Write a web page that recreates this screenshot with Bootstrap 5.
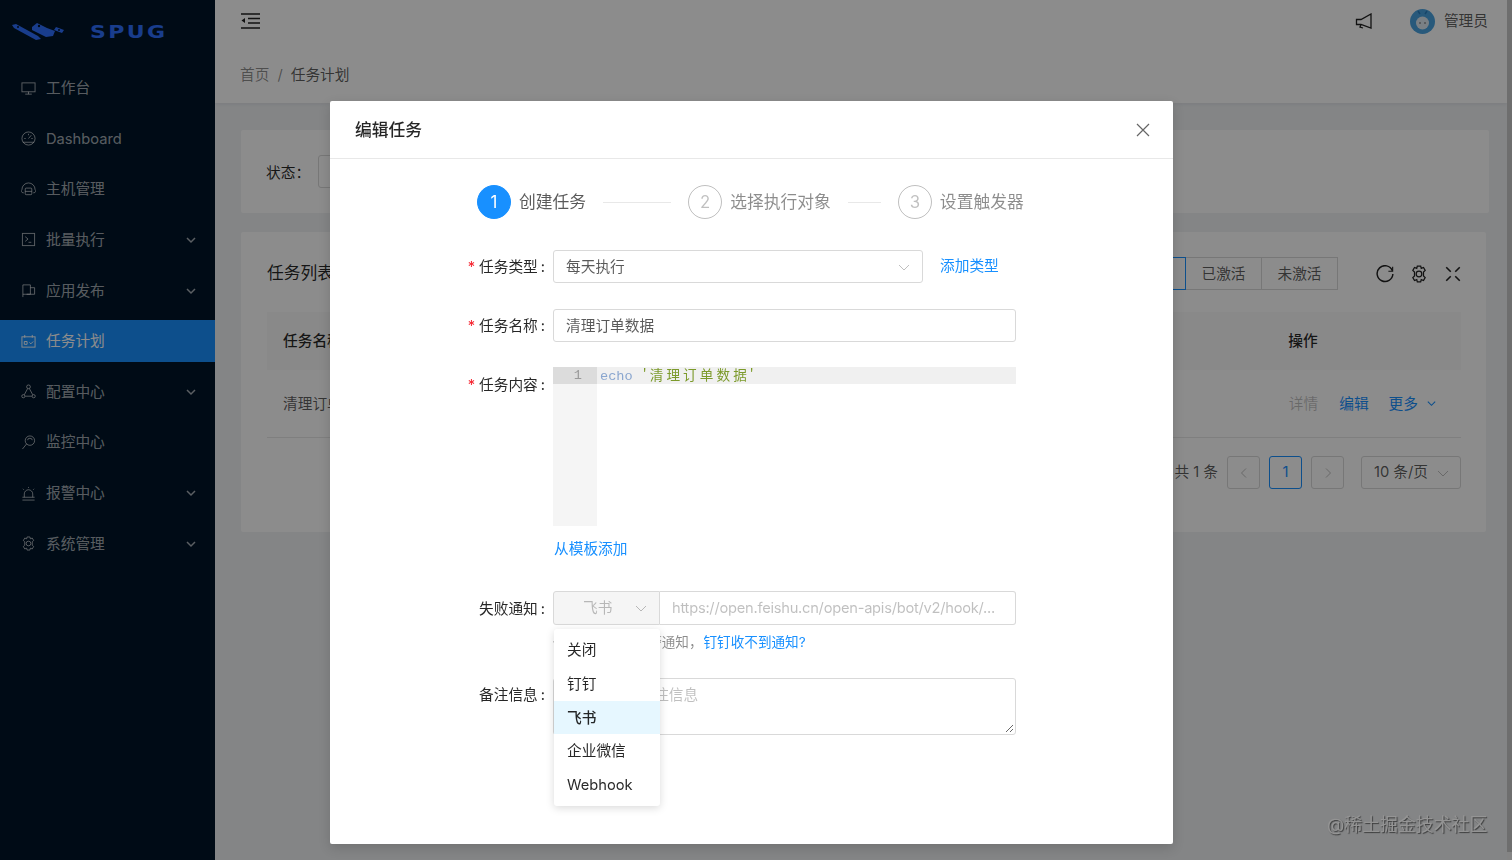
<!DOCTYPE html>
<html lang="zh"><head><meta charset="utf-8"><title>任务计划</title>
<link href="https://cdn.jsdelivr.net/npm/bootstrap@5.3.0/dist/css/bootstrap.min.css" rel="stylesheet">
<style>
html,body{height:860px;overflow:hidden}
body{font-family:Inter,"Noto Sans CJK SC",sans-serif;font-size:14.7px;color:rgba(0,0,0,.65);background:#f0f2f5}
.app{height:860px}
.side{width:215px;background:#001529;color:rgba(255,255,255,.65);flex:none}
.logo{height:63px;padding-left:12px}
.logo-word{font-family:"DejaVu Sans",sans-serif;font-weight:700;font-size:22px;letter-spacing:2.4px;color:#2f6fff;margin-left:25px;line-height:1;transform:scaleY(.8)}
.mi{height:42px;margin-bottom:8.65px;padding-left:21px;padding-right:18px}
.mi svg.ic{width:15px;height:15px;margin-right:10px;flex:none}
.mi .cv{margin-left:auto;width:12px;height:12px}
.mi.on{background:#1890ff;color:#fff}
.first-mi{margin-top:4px}
.main-col{flex:1;min-width:0}
.bar{width:5px;flex:none;background:linear-gradient(#c8c8c8 852px,#f0f0f0 852px)}
.top-h{height:103px;background:#fff;box-shadow:0 1px 4px rgba(0,21,41,.08)}
.tb{height:42px;padding:0 19px 0 26px}
.avt{margin-left:38px}
.adm{margin-left:9px}
.crumb{padding:20px 0 0 25px;line-height:26px}
.crumb i{font-style:normal;margin:0 8px;color:rgba(0,0,0,.45)}
.crumb span{color:rgba(0,0,0,.45)}
.crumb b{font-weight:400;color:rgba(0,0,0,.65)}
.pn{margin:27px 21px 0 26px}
.pcard{background:#fff;border-radius:2px}
.filter{height:83px;margin-right:-3px;padding-left:25px}
.flt-l{padding-top:3px;color:rgba(0,0,0,.85)}
.fake-sel{width:140px;height:33px;border:1px solid #d9d9d9;border-radius:3px;margin-left:8px}
.list{height:300px;margin-top:19px;padding:25px 25px 0 26px}
.list-h{height:33px;font-size:16.8px;color:rgba(0,0,0,.85)}
.seg{margin-left:auto;margin-right:38px;font-size:14.7px;color:rgba(0,0,0,.65)}
.seg span{height:33px;width:76px;border:1px solid #d9d9d9;border-left:0;display:flex;align-items:center;justify-content:center;padding-top:1px}
.seg span.act{width:120px;color:#1890ff;border:1px solid #1890ff}
.tools{gap:16px;margin-right:-1px}
.tools svg{width:18px;height:18px}
.thd{height:58px;margin-top:22px;background:#fafafa;color:rgba(0,0,0,.85);font-weight:500;padding-left:16px}
.trw{height:68px;border-bottom:1px solid #e8e8e8;padding-left:16px;padding-top:1px}
.col-op{margin-left:auto}
.thd .col-op{width:316px;text-align:center;padding-left:0}
.trw .col-op{padding-right:24px}
.off{color:rgba(0,0,0,.25)}
.lk{color:#1890ff;text-decoration:none}
.gap-e{margin-left:21px}
.gap-m{margin-left:20px}
.pg{margin-top:18px;height:33px}
.pgb{width:33px;height:33px;border:1px solid #d9d9d9;border-radius:3px;margin-left:9px;color:rgba(0,0,0,.25)}
.pgb.cur{color:#1890ff;border-color:#1890ff}
.pgs{width:100px;height:33px;border:1px solid #d9d9d9;border-radius:3px;margin-left:17px;padding-left:12px}
.pgc{margin-right:11px;color:rgba(0,0,0,.25)}
.mask{position:fixed;inset:0;background:rgba(0,0,0,.45)}
.dlg{position:absolute;left:330px;top:101px;width:843px;height:743px;background:#fff;border:0;border-radius:2px;color:rgba(0,0,0,.65);box-shadow:0 4px 12px rgba(0,0,0,.15)}
.dlg-h{height:58px;padding:0 23px 0 25px;border-bottom:1px solid #e8e8e8}
.dlg-t{font-size:16.8px;font-weight:500;color:rgba(0,0,0,.85);margin:0;line-height:1;padding-top:1px}
.steps{margin:26px 0 0 147px;height:34px;font-size:16.8px;color:rgba(0,0,0,.45)}
.steps>span{padding-top:2px}
.circ{width:34px;height:34px;border-radius:50%;border:1px solid rgba(0,0,0,.25);color:rgba(0,0,0,.25);margin-right:8px;font-size:16.8px;flex:none;padding-top:1px}
.circ.cur{background:#1890ff;border-color:#1890ff;color:#fff}
.cur-t{color:rgba(0,0,0,.65)}
.ln{height:1px;background:#e8e8e8;flex:none;margin:0 16px 0 17px}
.lnw1{width:68px;margin-right:17px}
.lnw2{width:33px;margin-right:17px}
.frow{display:flex}
.rw1{margin-top:31px}
.rw2{margin-top:26px}
.rw3{margin-top:25px}
.lb3{margin-top:1px}
.rw4{margin:12px 0 0 224px;line-height:21px}
.rw5{margin-top:31px}
.rw6{margin-top:25px}
.add-t{margin-left:17px}
.flb{width:223px;height:33px;text-align:right;padding:1px 8px 0 0;color:rgba(0,0,0,.85);line-height:32px;flex:none}
.flb em{font-style:normal;color:#f5222d;margin-right:4px}
.flb u{text-decoration:none;margin-left:3px}
.fc{height:33px;border:1px solid #d9d9d9;border-radius:3px;padding:1px 12px 0;color:rgba(0,0,0,.65);display:flex;align-items:center;font-size:14.7px;box-shadow:none}
.fc svg,.nsel svg{width:12px;height:12px;margin-left:auto;color:rgba(0,0,0,.25)}
.w1{width:370px}.w2{width:463px}
.ed{width:463px;height:160px;position:relative;font-family:"Liberation Mono",monospace;font-size:13.6px;line-height:17px}
.gut{width:44px;height:159px;background:#f5f5f5}
.gut-a{height:17px;background:#dcdcdc;color:#999;text-align:right;padding-right:15px}
.ed-l{flex:1;height:17px;background:#f0f0f0;padding-left:3px;color:#8aa6cf;line-height:15px}
.ed-l b{font-weight:400;color:#7c9a2b;margin-left:2px}
.ed-l b span{font-family:"Noto Sans CJK SC",sans-serif;font-size:13.6px;letter-spacing:3.1px;line-height:15px}
.nsel{width:107px;height:34px;background:#f5f5f5;border:1px solid #d9d9d9;border-radius:3px 0 0 3px;color:rgba(0,0,0,.25);padding:0 12px 0 29px}
.nin{width:356px;height:34px;border:1px solid #d9d9d9;border-left:0;border-radius:0 3px 3px 0;padding:0 12px;color:rgba(0,0,0,.25);white-space:nowrap;overflow:hidden;letter-spacing:-.26px}
.hlp{margin:7px 0 0 223px;height:21px;line-height:21px;font-size:13.6px;color:rgba(0,0,0,.45)}
.hlp a{margin-left:1px}
.ta{width:463px;height:57px;border:1px solid #d9d9d9;border-radius:3px;padding:5px 12px;color:rgba(0,0,0,.25);position:relative}
.ta svg{position:absolute;right:1px;bottom:1px}
.nx{margin:26px 0 0 224px;height:33px;width:90px;background:#1890ff;color:#fff;border:0;border-radius:3px;font-size:14.7px}
.dd{position:absolute;left:224px;top:528px;width:106px;padding:4px 0;background:#fff;border-radius:3px;box-shadow:0 2px 8px rgba(0,0,0,.15);z-index:3}
.dd div{height:33.8px;line-height:35px;padding-left:13px;color:rgba(0,0,0,.85)}
.dd div.sel{background:#e6f7ff;font-weight:500}
.wm{position:absolute;left:1327px;top:812px;font-size:17.9px;line-height:26px;color:rgba(150,150,150,.95);text-shadow:1px 1px 1px rgba(0,0,0,.55)}
</style></head><body>
<div class="app d-flex">
 <aside class="side">
  <div class="logo d-flex align-items-center">
   <svg width="53" height="24" viewBox="0 0 53 24"><g fill="#2f6fff"><path d="M0 5l4-1 22 12 3 3-5 1L2 8z"/><path d="M20 7l5-4 10 5 8 3-2 5-7 1-14-7z"/><path d="M42 10l2-3 8 3-2 3z"/></g><g fill="#001529"><circle cx="27" cy="6" r="1.2"/><circle cx="6" cy="7" r="1"/><circle cx="47" cy="10" r="1"/></g></svg>
   <span class="logo-word">SPUG</span>
  </div>
  <div class="mi first-mi d-flex align-items-center"><svg class="ic" viewBox="0 0 16 16" fill="none" stroke="currentColor"><rect x="1" y="2" width="14" height="9.5"/><path d="M8 11.5V14M4.5 14h7"/></svg>工作台</div>
  <div class="mi d-flex align-items-center"><svg class="ic" viewBox="0 0 16 16" fill="none" stroke="currentColor"><circle cx="8" cy="8" r="7"/><path d="M8 8l3-3.5M3.5 8h1.5M11 8h1.5M8 3v1.5M2 12h12"/></svg>Dashboard</div>
  <div class="mi d-flex align-items-center"><svg class="ic" viewBox="0 0 16 16" fill="none" stroke="currentColor"><path d="M3 11.5H2.500A2 2 0 0 1 1 8a7 7 0 0 1 14 0 2 2 0 0 1-1.500 3.500H13"/><rect x="4.500" y="6.500" width="7" height="7" rx="1"/><path d="M4.500 10h7"/></svg>主机管理</div>
  <div class="mi d-flex align-items-center"><svg class="ic" viewBox="0 0 16 16" fill="none" stroke="currentColor"><rect x="1.500" y="1.500" width="13" height="13"/><path d="M4.500 5l3 2.500-3 2.500M8 11h3"/></svg>批量执行<svg class="cv" viewBox="0 0 12 12" fill="none" stroke="currentColor" stroke-width="1.500"><path d="M2 4l4 4 4-4"/></svg></div>
  <div class="mi d-flex align-items-center"><svg class="ic" viewBox="0 0 16 16" fill="none" stroke="currentColor"><path d="M2 15V2h8v10H2M10 5h4.500v7H6"/></svg>应用发布<svg class="cv" viewBox="0 0 12 12" fill="none" stroke="currentColor" stroke-width="1.500"><path d="M2 4l4 4 4-4"/></svg></div>
  <div class="mi on d-flex align-items-center"><svg class="ic" viewBox="0 0 16 16" fill="none" stroke="currentColor"><rect x="1" y="3" width="14" height="11"/><path d="M4 1v3M12 1v3M3.500 8h3v3h-3zM9 9l1.500 1.500L13 8"/></svg>任务计划</div>
  <div class="mi d-flex align-items-center"><svg class="ic" viewBox="0 0 16 16" fill="none" stroke="currentColor"><circle cx="8" cy="3" r="2"/><circle cx="2.500" cy="13" r="1.700"/><circle cx="13.500" cy="13" r="1.700"/><path d="M7 5l-3.500 6.500M9 5l3.500 6.500M4.500 13h7"/></svg>配置中心<svg class="cv" viewBox="0 0 12 12" fill="none" stroke="currentColor" stroke-width="1.500"><path d="M2 4l4 4 4-4"/></svg></div>
  <div class="mi d-flex align-items-center"><svg class="ic" viewBox="0 0 16 16" fill="none" stroke="currentColor"><circle cx="9.500" cy="6" r="5"/><path d="M6 9.500L1.500 15M7 5.500a2.500 2 0 0 1 5 0"/></svg>监控中心</div>
  <div class="mi d-flex align-items-center"><svg class="ic" viewBox="0 0 16 16" fill="none" stroke="currentColor"><path d="M3.500 12V8.500a4.500 4.500 0 0 1 9 0V12M1.500 12h13M1.500 15h13M8 1v1M2 3l1 1M14 3l-1 1"/></svg>报警中心<svg class="cv" viewBox="0 0 12 12" fill="none" stroke="currentColor" stroke-width="1.500"><path d="M2 4l4 4 4-4"/></svg></div>
  <div class="mi d-flex align-items-center"><svg class="ic" viewBox="0 0 16 16" fill="none" stroke="currentColor"><path d="M6.500 1h3l.5 2 2-.8 1.500 2.600-1.500 1.400v3.600l1.500 1.400-1.500 2.600-2-.8-.5 2h-3l-.5-2-2 .8L2.500 11.200 4 9.800V6.200L2.500 4.800 4 2.200l2 .8z"/><circle cx="8" cy="8" r="2.500"/></svg>系统管理<svg class="cv" viewBox="0 0 12 12" fill="none" stroke="currentColor" stroke-width="1.500"><path d="M2 4l4 4 4-4"/></svg></div>
 </aside>
 <div class="main-col">
  <div class="top-h">
   <div class="tb d-flex align-items-center">
    <svg width="19" height="16" viewBox="0 0 19 16" fill="none" stroke="#222" stroke-width="1.400"><path d="M0 1h19M7 5.500h12M7 10h12M0 15h19"/><path d="M4 5v5L0.500 7.500z" fill="#222" stroke="none"/></svg>
    <div class="ms-auto d-flex align-items-center">
     <svg width="17" height="16" viewBox="0 0 17 16" fill="none" stroke="#222" stroke-width="1.300"><path d="M16 1v14L6 11.500H1.500V6.500H6z"/><path d="M6 11.500l-1 2.500 3 1"/></svg>
     <svg class="avt" width="25" height="25" viewBox="0 0 25 25"><circle cx="12.500" cy="12.500" r="12.500" fill="#4aa3e0"/><circle cx="12.500" cy="14" r="6.500" fill="#dfeaf2"/><circle cx="10" cy="14" r=".8" fill="#555"/><circle cx="15" cy="14" r=".8" fill="#555"/><path d="M8 2l2 3M17 2l-2 3" stroke="#2a7fc0" stroke-width="1.500"/></svg>
     <span class="adm">管理员</span>
    </div>
   </div>
   <div class="crumb"><span>首页</span><i>/</i><b>任务计划</b></div>
  </div>
  <div class="pn">
   <div class="pcard filter d-flex align-items-center"><span class="flt-l">状态：</span><div class="fake-sel"></div></div>
   <div class="pcard list">
    <div class="list-h d-flex align-items-center"><span>任务列表</span>
     <div class="seg d-flex"><span class="act">全部</span><span>已激活</span><span>未激活</span></div>
     <div class="tools d-flex align-items-center">
      <svg viewBox="0 0 16 16" fill="none" stroke="#222" stroke-width="1.300"><path d="M14.500 5A7 7 0 1 0 15 8"/><path d="M14.800 1.500V5.500H11" stroke-width="1"/></svg>
      <svg viewBox="0 0 16 16" fill="none" stroke="#222" stroke-width="1.100"><path d="M6.500 1h3l.5 2 2-.8 1.500 2.600-1.500 1.400v3.600l1.500 1.400-1.500 2.600-2-.8-.5 2h-3l-.5-2-2 .8L2.500 11.200 4 9.800V6.200L2.500 4.800 4 2.200l2 .8z"/><circle cx="8" cy="8" r="2.500"/></svg>
      <svg viewBox="0 0 16 16" fill="none" stroke="#222" stroke-width="1.400"><path d="M2 2l4 4M14 2l-4 4M2 14l4-4M14 14l-4-4"/></svg>
     </div>
    </div>
    <div class="thd d-flex align-items-center"><span>任务名称</span><span class="col-op">操作</span></div>
    <div class="trw d-flex align-items-center"><span>清理订单数据</span><span class="col-op ms-auto d-flex align-items-center"><span class="off">详情</span><a class="lk gap-e">编辑</a><a class="lk gap-m">更多</a><svg class="ms-2" width="11" height="11" viewBox="0 0 12 12" fill="none" stroke="#1890ff" stroke-width="1.200"><path d="M2 4l4 4 4-4"/></svg></span></div>
    <div class="pg d-flex justify-content-end align-items-center"><span>共 1 条</span>
     <div class="pgb d-flex align-items-center justify-content-center"><svg width="10" height="10" viewBox="0 0 10 10" fill="none" stroke="currentColor"><path d="M7 0.500L2.500 5 7 9.500"/></svg></div>
     <div class="pgb cur d-flex align-items-center justify-content-center">1</div>
     <div class="pgb d-flex align-items-center justify-content-center"><svg width="10" height="10" viewBox="0 0 10 10" fill="none" stroke="currentColor"><path d="M3 0.500L7.500 5 3 9.500"/></svg></div>
     <div class="pgs d-flex align-items-center">10 条/页<svg class="ms-auto pgc" width="12" height="12" viewBox="0 0 12 12" fill="none" stroke="currentColor"><path d="M1 4l5 5 5-5"/></svg></div>
    </div>
   </div>
  </div>
 </div>
 <div class="bar"></div>
</div>
<div class="mask"></div>
<div class="modal-content dlg">
 <div class="dlg-h d-flex align-items-center justify-content-between"><h5 class="dlg-t">编辑任务</h5>
  <svg width="14" height="14" viewBox="0 0 14 14" fill="none" stroke="#666" stroke-width="1.200"><path d="M1 1l12 12M13 1L1 13"/></svg></div>
 <div class="steps d-flex align-items-center">
  <div class="circ cur d-flex align-items-center justify-content-center">1</div><span class="cur-t">创建任务</span><div class="ln lnw1"></div>
  <div class="circ d-flex align-items-center justify-content-center">2</div><span>选择执行对象</span><div class="ln lnw2"></div>
  <div class="circ d-flex align-items-center justify-content-center">3</div><span>设置触发器</span>
 </div>
 <div class="frow align-items-center rw1"><div class="flb"><em>*</em>任务类型<u>:</u></div><div class="fc w1">每天执行<svg viewBox="0 0 12 12" fill="none" stroke="currentColor"><path d="M1 4l5 5 5-5"/></svg></div><a class="lk add-t">添加类型</a></div>
 <div class="frow align-items-center rw2"><div class="flb"><em>*</em>任务名称<u>:</u></div><div class="fc w2">清理订单数据</div></div>
 <div class="frow rw3"><div class="flb lb3"><em>*</em>任务内容<u>:</u></div>
  <div class="ed"><div class="d-flex"><div class="gut"><div class="gut-a">1</div></div><div class="ed-l">echo<b> <span>'清理订单数据'</span></b></div></div></div></div>
 <div class="frow rw4"><a class="lk">从模板添加</a></div>
 <div class="frow align-items-center rw5"><div class="flb">失败通知<u>:</u></div><div class="nsel d-flex align-items-center">飞书<svg viewBox="0 0 12 12" fill="none" stroke="currentColor"><path d="M1 4l5 5 5-5"/></svg></div><div class="nin d-flex align-items-center">https://open.feishu.cn/open-apis/bot/v2/hook/...</div></div>
 <div class="hlp">任务执行失败告警通知，<a class="lk">钉钉收不到通知?</a></div>
 <div class="frow rw6"><div class="flb">备注信息<u>:</u></div><div class="ta">请输入任务备注信息<svg width="9" height="9" viewBox="0 0 9 9" stroke="#666" fill="none"><path d="M1 8l7-7M5 8l3-3"/></svg></div></div>
 <div><button class="nx" type="button">下一步</button></div>
 <div class="dd"><div>关闭</div><div>钉钉</div><div class="sel">飞书</div><div>企业微信</div><div>Webhook</div></div>
</div>
<div class="wm">@稀土掘金技术社区</div>
<script src="https://cdn.jsdelivr.net/npm/bootstrap@5.3.0/dist/js/bootstrap.bundle.min.js"></script>
</body></html>
